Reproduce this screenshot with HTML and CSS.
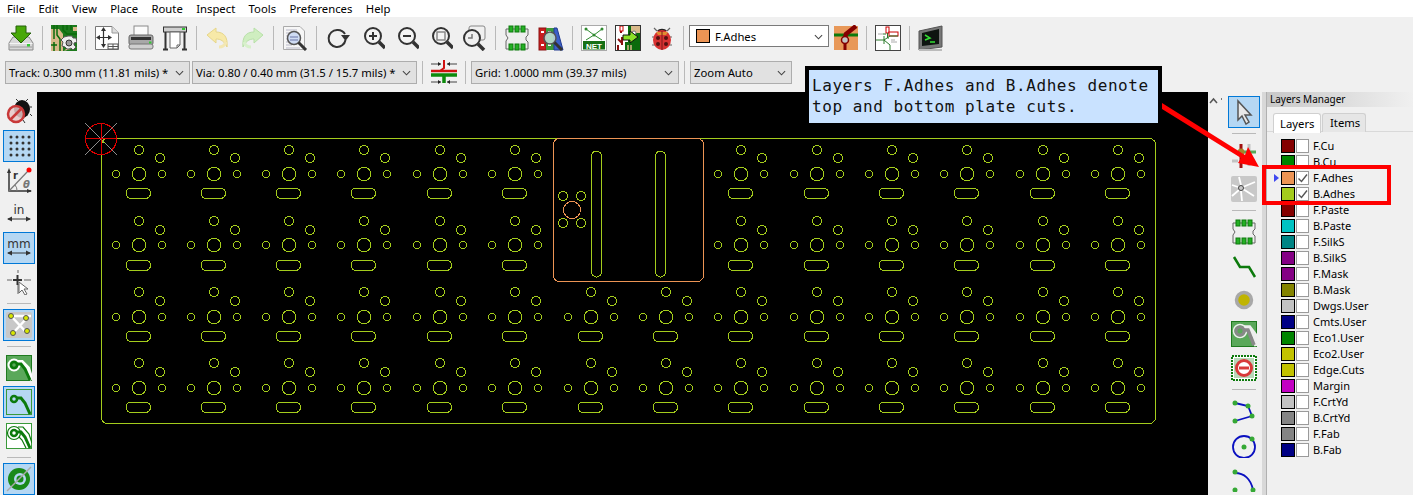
FILE: index.html
```html
<!DOCTYPE html>
<html lang="en">
<head>
<meta charset="utf-8">
<title>Pcbnew</title>
<link rel="stylesheet" href="styles.css">
</head>
<body>
<div class="app">
  <nav class="menubar">
    <span>File</span><span>Edit</span><span>View</span><span>Place</span><span>Route</span><span>Inspect</span><span>Tools</span><span>Preferences</span><span>Help</span>
  </nav>

  <div class="toolbar">
    <svg class="ico" viewBox="0 0 26 26"><path d="M1 18 5 12H21L25 18V25H1Z" fill="#d8d8d8" stroke="#8a8a8a"/><path d="M1.500 18.500H24.500" stroke="#f4f4f4"/><path d="M2 22H24" stroke="#9a9a9a" stroke-width="1"/><rect x="19" y="19" width="3" height="2.500" fill="#35c835"/><path d="M8 1H18V8H23L13 18 3 8H8Z" fill="#48a808" stroke="#24600a"/></svg>
    <i class="sep"></i>
    <svg class="ico" viewBox="0 0 26 26"><rect width="26" height="26" fill="#1d7a1d"/><path d="M0 4H8L12 9V26H0Z" fill="#d9b98a"/><path d="M3 0V14M6 0V10L9 14V26M3 17V26M12 0V5L16 9H26M16 0V5M20 0V5M0 20H6" stroke="#0b6b0b" stroke-width="1.500" fill="none"/><path d="M13 26 17 22H26M22 2H26V6H22Z" fill="#d9b98a"/><path d="M17 11H21L22 13 25 13 26 17 23 18V20L25 22 22 25 20 23 18 24H16L14 22 11 21 12 17 10 15 13 12Z" fill="#eee" stroke="#555"/><circle cx="18" cy="18" r="3" fill="#999" stroke="#333"/></svg>
    <i class="sep"></i>
    <svg class="ico" viewBox="0 0 26 26"><path d="M1.500 1.500H18L24.500 8V24.500H1.500Z" fill="#fff" stroke="#777"/><path d="M18 1.500V8H24.500" fill="#ddd" stroke="#999"/><path d="M9.500 4V21M3 12.500H17" stroke="#333" stroke-width="1.200"/><path d="M9.500 2 7 6H12ZM9.500 23 7 19H12ZM2 12.500 6 10V15ZM18 12.500 14 10V15Z" fill="#333"/><rect x="14" y="19" width="10" height="5" fill="#fff" stroke="#555"/><path d="M14 21.500H24M19 19V24" stroke="#555"/></svg>
    <svg class="ico" viewBox="0 0 26 26"><rect x="6" y="1" width="14" height="10" fill="#fbfbfb" stroke="#8a8a8a"/><rect x="1" y="10" width="24" height="10" rx="2" fill="#a8a8a8" stroke="#666"/><rect x="3" y="12" width="20" height="3" fill="#333"/><rect x="1" y="19" width="24" height="5" rx="2" fill="#cfcfcf" stroke="#777"/><rect x="21" y="16.500" width="2.500" height="2" fill="#35c835"/></svg>
    <svg class="ico" viewBox="0 0 26 26"><rect x="1.500" y="2" width="23" height="5" fill="#cfcfcf" stroke="#333"/><rect x="20" y="3" width="3" height="2" fill="#35c835"/><path d="M3.500 7V24M22.500 7V24M1 24.500H6M20 24.500H25" stroke="#333" stroke-width="2" fill="none"/><path d="M8 7H18V20L15 23H8Z" fill="#fff" stroke="#666"/><path d="M15 23V20H18" fill="none" stroke="#666"/></svg>
    <i class="sep"></i>
    <svg class="ico" viewBox="0 0 26 26"><path d="M2 10 11 3V7C19 7 23 12 22 22 19 16 16 14 11 14V18Z" fill="#f7e9a8" stroke="#e6d68a"/><path d="M14 22C18 22 20 20 21 17" stroke="#f3e7b3" stroke-width="3" fill="none"/></svg>
    <svg class="ico" viewBox="0 0 26 26"><path d="M24 10 15 3V7C7 7 3 12 4 22 7 16 10 14 15 14V18Z" fill="#cfeec0" stroke="#b8e0a8"/><path d="M12 22C8 22 6 20 5 17" stroke="#d8f0cc" stroke-width="3" fill="none"/></svg>
    <i class="sep"></i>
    <svg class="ico" viewBox="0 0 26 26"><path d="M1.500 1.500H18L22.500 6V24.500H1.500Z" fill="#f6f6f6" stroke="#aaa"/><path d="M4 5H15M4 8H8M4 11H6M4 14H6M4 17H7M4 20H10M4 23H18" stroke="#b8b8c8"/><circle cx="12" cy="13" r="6.500" fill="#cfdcf4" stroke="#555" stroke-width="1.500"/><path d="M8 12H16M8 15H16" stroke="#8c96c0" stroke-width="1.500"/><path d="M16.500 17.500 24 25" stroke="#333" stroke-width="3"/></svg>
    <i class="sep"></i>
    <svg class="ico" viewBox="0 0 26 26"><path d="M12 5A8.500 8.500 0 1 0 20.500 15" fill="none" stroke="#333" stroke-width="2"/><path d="M12 5A8.500 8.500 0 0 1 20 9" fill="none" stroke="#333" stroke-width="2"/><path d="M16 10H25L20.500 16Z" fill="#333"/></svg>
    <svg class="ico" viewBox="0 0 26 26"><circle cx="14" cy="11" r="8" fill="#fff" fill-opacity=".3" stroke="#333" stroke-width="2"/><path d="M10 11H18M14 7V15" stroke="#333" stroke-width="2"/><path d="M20 17 26 23" stroke="#333" stroke-width="3.500"/></svg>
    <svg class="ico" viewBox="0 0 26 26"><circle cx="14" cy="11" r="8" fill="#fff" fill-opacity=".3" stroke="#333" stroke-width="2"/><path d="M10 11H18" stroke="#333" stroke-width="2"/><path d="M20 17 26 23" stroke="#333" stroke-width="3.500"/></svg>
    <svg class="ico" viewBox="0 0 26 26"><circle cx="14" cy="11" r="8" fill="#fff" fill-opacity=".3" stroke="#333" stroke-width="2"/><rect x="10" y="7" width="8" height="8" fill="none" stroke="#888" stroke-width="1.500"/><path d="M20 17 26 23" stroke="#333" stroke-width="3.500"/></svg>
    <svg class="ico" viewBox="0 0 26 26"><rect x="8" y="1" width="16" height="14" rx="2" fill="#f0f0f0" stroke="#888"/><circle cx="11" cy="13" r="8" fill="#f0f0f0" stroke="#333" stroke-width="2"/><path d="M7 13H11V9" fill="none" stroke="#777" stroke-width="1.500"/><path d="M17 19 23 25" stroke="#333" stroke-width="3.500"/></svg>
    <i class="sep"></i>
    <svg class="ico" viewBox="0 0 26 26"><use href="#fp"/></svg>
    <svg class="ico" viewBox="0 0 26 26"><rect x="1" y="3" width="7" height="22" fill="#c81e1e" stroke="#8a1010"/><rect x="8" y="3" width="8" height="22" fill="#3c9a3c"/><path d="M16 3H19L25 25H16Z" fill="#3c5fc8" stroke="#203a90"/><path d="M3 7H6M3 20H6M10 7H13M10 20H13" stroke="#fff" stroke-width="2"/><circle cx="12" cy="13" r="6" fill="#cfe6e6" fill-opacity=".8" stroke="#555" stroke-width="1.500"/><path d="M16.500 17.500 24 25" stroke="#333" stroke-width="3"/></svg>
    <i class="sep"></i>
    <svg class="ico" viewBox="0 0 26 26"><rect x=".5" y=".5" width="25" height="25" fill="#fff" stroke="#aaa"/><path d="M5 4 13 10 21 4M5 15 13 10 21 15" stroke="#2f8a2f" fill="none"/><circle cx="5" cy="4" r="1.500" fill="#2f8a2f"/><circle cx="21" cy="4" r="1.500" fill="#2f8a2f"/><circle cx="13" cy="10" r="1.500" fill="#2f8a2f"/><rect x="2" y="16" width="22" height="8.500" fill="#167016"/><text x="13" y="23.500" class="net">NET</text></svg>
    <svg class="ico" viewBox="0 0 26 26"><rect width="26" height="26" fill="#fff"/><path d="M13 0H26V26H10V17H13Z" fill="#0c6b0c"/><path d="M16 0H26V8H20L16 12Z" fill="#d9b98a"/><circle cx="19" cy="8" r="2" fill="#fff" stroke="#777"/><path d="M6 3V8M3 14 7 18M7 12V20M3 26V20" stroke="#8a1010" stroke-width="2" fill="none"/><rect x="5" y="1" width="3" height="5" fill="#fff" stroke="#c00"/><path d="M8 10H15V6L23 12 15 18V15H8Z" fill="#8be028" stroke="#111"/><path d="M13 26V20M16 26V20" stroke="#d9b98a" stroke-width="1.500"/><rect x=".5" y=".5" width="25" height="25" fill="none" stroke="#333"/></svg>
    <svg class="ico" viewBox="0 0 26 26"><path d="M5 3 8 6M21 3 18 6M3 12H6M20 12H23M3 20H6M20 20H23" stroke="#666" stroke-width="1.200"/><path d="M8 6C10 3 16 3 18 6Z" fill="#222"/><ellipse cx="13" cy="15" rx="9" ry="10" fill="#d83232"/><path d="M7 7H19L17 10H9Z" fill="#e8c830" fill-opacity=".6"/><path d="M13 6V25" stroke="#7a1a1a"/><circle cx="9" cy="13" r="2" fill="#511"/><circle cx="17" cy="13" r="2" fill="#511"/><circle cx="9" cy="19" r="2" fill="#511"/><circle cx="17" cy="19" r="2" fill="#511"/></svg>
    <i class="sep"></i>
    <div class="layer-select">
      <b class="swatch-lg"></b><span>F.Adhes</span>
      <svg class="chev" viewBox="0 0 10 6"><path d="M1 1 5 5 9 1" fill="none" stroke="#444" stroke-width="1.200"/></svg>
    </div>
    <svg class="ico narrow" viewBox="0 0 24 26"><rect y="1" width="24" height="24" fill="#e89858"/><path d="M0 10H24" stroke="#0c7a0c" stroke-width="3"/><path d="M11 13 12 9 22 1" stroke="#840000" stroke-width="4.500" fill="none"/><path d="M11 14V25" stroke="#840000" stroke-width="3"/><circle cx="11" cy="15" r="3.500" fill="#c2c2c2" stroke="#840000" stroke-width="1.500"/></svg>
    <i class="sep"></i>
    <svg class="ico" viewBox="0 0 26 26"><rect x=".5" y=".5" width="25" height="25" fill="#fff" stroke="#444"/><rect x="11" y="2" width="3" height="6" fill="#fff" stroke="#c00"/><rect x="14" y="7" width="9" height="4" fill="#fff" stroke="#c00"/><path d="M12.500 8V13H14M8 9H11M1 15H9M9 11V19M9 15 15 11M9 15 15 20" stroke="#2a7a2a" fill="none"/><path d="M15 20V25M15 11H23" stroke="#2a7a2a"/><path d="M16 15H20M16 17H22M3 9H8" stroke="#aaa"/></svg>
    <i class="sep"></i>
    <svg class="ico" viewBox="0 0 26 26"><path d="M1 6 24 1V22L1 25Z" fill="#777" stroke="#555"/><path d="M4 8 21 4V19L4 21Z" fill="#0e1410"/><path d="M7 10 12 13 7 15" fill="none" stroke="#35e035" stroke-width="1.500"/><path d="M12 17H17" stroke="#35e035" stroke-width="1.500"/><path d="M1 25H24" stroke="#bbb" stroke-width="2"/></svg>
  </div>

  <div class="toolbar2">
    <div class="combo track">Track: 0.300 mm (11.81 mils) *<svg class="chev" viewBox="0 0 10 6"><path d="M1 1 5 5 9 1" fill="none" stroke="#444" stroke-width="1.200"/></svg></div>
    <div class="combo via">Via: 0.80 / 0.40 mm (31.5 / 15.7 mils) *<svg class="chev" viewBox="0 0 10 6"><path d="M1 1 5 5 9 1" fill="none" stroke="#444" stroke-width="1.200"/></svg></div>
    <i class="sep tall"></i>
    <svg class="ico spaced" viewBox="0 0 26 26"><path d="M0 4H10M16 4H26" stroke="#444"/><path d="M10 4 7 2V6ZM16 4 19 2V6Z" fill="#222"/><path d="M13 0V8L9 11" stroke="#d01010" stroke-width="2" fill="none"/><path d="M0 11H26" stroke="#d01010" stroke-width="2.500"/><path d="M0 15H26" stroke="#0c8a0c" stroke-width="3.500"/><path d="M13 15V23" stroke="#0c8a0c" stroke-width="3.500"/><path d="M0 22H10M16 22H26" stroke="#444"/><path d="M10 22 7 20V24ZM16 22 19 20V24Z" fill="#222"/></svg>
    <i class="sep tall"></i>
    <div class="combo grid">Grid: 1.0000 mm (39.37 mils)<svg class="chev" viewBox="0 0 10 6"><path d="M1 1 5 5 9 1" fill="none" stroke="#444" stroke-width="1.200"/></svg></div>
    <i class="sep tall"></i>
    <div class="combo zoom">Zoom Auto<svg class="chev" viewBox="0 0 10 6"><path d="M1 1 5 5 9 1" fill="none" stroke="#444" stroke-width="1.200"/></svg></div>
  </div>

  <main class="main">
    <aside class="lefttools">
      <div class="tool"><svg class="ico" viewBox="0 0 26 26"><ellipse cx="16" cy="10" rx="8" ry="9" fill="#111"/><path d="M12 2 10 0M20 2 22 0M24 8H26M24 15 26 17M17 21 19 24" stroke="#333"/><circle cx="10" cy="15" r="8" fill="#e8c8c8" fill-opacity=".85" stroke="#c83838" stroke-width="2.500"/><path d="M5 20 15 10" stroke="#c83838" stroke-width="2.500"/></svg></div>
      <div class="tool on"><svg class="ico" viewBox="0 0 26 26"><g fill="#333"><circle cx="5" cy="4" r="1.500"/><circle cx="11" cy="4" r="1.500"/><circle cx="17" cy="4" r="1.500"/><circle cx="23" cy="4" r="1.500"/><circle cx="5" cy="10" r="1.500"/><circle cx="11" cy="10" r="1.500"/><circle cx="17" cy="10" r="1.500"/><circle cx="23" cy="10" r="1.500"/><circle cx="5" cy="16" r="1.500"/><circle cx="11" cy="16" r="1.500"/><circle cx="17" cy="16" r="1.500"/><circle cx="23" cy="16" r="1.500"/><circle cx="5" cy="22" r="1.500"/><circle cx="11" cy="22" r="1.500"/><circle cx="17" cy="22" r="1.500"/><circle cx="23" cy="22" r="1.500"/></g></svg></div>
      <div class="tool"><svg class="ico" viewBox="0 0 26 26"><path d="M3 4V24H25" fill="none" stroke="#333" stroke-width="1.500"/><path d="M3 1 1 6H5ZM26 24 21 22V26Z" fill="#333"/><path d="M3 24 22 4" stroke="#777" stroke-width="1.200"/><circle cx="23" cy="3" r="2.500" fill="#f00"/><path d="M11 24A8 8 0 0 0 9 18" fill="none" stroke="#777"/><text x="7" y="12" class="g-r">r</text><text x="17" y="21" class="g-t">θ</text></svg></div>
      <div class="tool"><svg class="ico" viewBox="0 0 26 26"><text x="13" y="13" class="unit">in</text><path d="M2 18H24" stroke="#333"/><path d="M1 18 6 15.500V20.500ZM25 18 20 15.500V20.500Z" fill="#333"/></svg></div>
      <div class="tool on"><svg class="ico" viewBox="0 0 26 26"><text x="13" y="13" class="unit">mm</text><path d="M2 18H24" stroke="#333"/><path d="M1 18 6 15.500V20.500ZM25 18 20 15.500V20.500Z" fill="#333"/></svg></div>
      <div class="tool"><svg class="ico" viewBox="0 0 26 26"><path d="M1 11H6M18 11H25M12 1V4M12 15V25" stroke="#aaa" stroke-width="2"/><path d="M7 11H16M11.500 6V16" stroke="#333" stroke-width="2"/><path d="M13 13V24L16 21 19 26 21 25 18 20 22 20Z" fill="#fff" stroke="#666"/></svg></div>
      <i class="hsep"></i>
      <div class="tool on"><svg class="ico" viewBox="0 0 26 26"><rect width="26" height="26" rx="2" fill="#c8c8c8"/><path d="M5 4 20 20M21 6 8 20M7 4H25" stroke="#fff" stroke-width="2.500"/><g fill="#d8e800" stroke="#555"><circle cx="5" cy="4" r="2.500"/><circle cx="20" cy="6" r="2.500"/><circle cx="7" cy="21" r="2.500"/><circle cx="21" cy="19" r="2.500"/></g></svg></div>
      <i class="hsep"></i>
      <div class="tool"><svg class="ico" viewBox="0 0 26 26"><rect x=".5" y=".5" width="25" height="25" fill="#5aa85a" stroke="#1f7a1f"/><use href="#tr-w"/><use href="#tr-g"/></svg></div>
      <div class="tool on"><svg class="ico" viewBox="0 0 26 26"><rect x=".5" y=".5" width="25" height="25" fill="none" stroke="#3a9a3a"/><use href="#tr-g"/></svg></div>
      <div class="tool"><svg class="ico" viewBox="0 0 26 26"><rect x=".5" y=".5" width="25" height="25" fill="#fff" stroke="#3a9a3a"/><use href="#tr-w2"/><use href="#tr-g"/></svg></div>
      <i class="hsep"></i>
      <div class="tool on"><svg class="ico" viewBox="0 0 26 26"><circle cx="13" cy="13" r="11" fill="#1a8a1a"/><circle cx="14" cy="13" r="6" fill="#b5d7f3"/><circle cx="14" cy="13" r="3.500" fill="#1a8a1a"/><path d="M1 25 25 1" stroke="#aaa" stroke-width="1.500"/></svg></div>
    </aside>

    <div class="canvas">
      <svg class="board" viewBox="37 92 1171 403" shape-rendering="crispEdges">
        <defs>
          <g id="key"><circle cy="-24" r="4.500"/><circle cx="21" cy="-16" r="4.500"/><circle cx="-23" r="3.500"/><circle cx="23" r="3.500"/><circle r="6.800"/><rect x="-13" y="14" width="24.500" height="10.500" rx="5"/></g>
          <g id="key-b"><circle cy="-24" r="4.500"/><circle cx="21" cy="-15" r="4.500"/><circle cx="-23" r="3.500"/><circle cx="23" r="3.500"/><circle r="6.800"/><rect x="-13" y="15" width="24.500" height="10.500" rx="5"/></g>
          <g id="key-c"><circle cy="-25" r="4.500"/><circle cx="21" cy="-16" r="4.500"/><circle cx="-23" r="3.500"/><circle cx="23" r="3.500"/><circle r="6.800"/><rect x="-13" y="14" width="24.500" height="10.500" rx="5"/></g>
        </defs>
        <g class="adhes-b">
          <rect x="101.500" y="138.500" width="1054" height="285" rx="6"/>
          <use href="#key" x="139" y="174"/><use href="#key" x="214" y="174"/><use href="#key" x="289" y="174"/><use href="#key" x="364" y="174"/><use href="#key" x="440" y="174"/><use href="#key" x="515" y="174"/><use href="#key" x="741" y="174"/><use href="#key" x="817" y="174"/><use href="#key" x="892" y="174"/><use href="#key" x="967" y="174"/><use href="#key" x="1043" y="174"/><use href="#key" x="1118" y="174"/>
          <use href="#key-b" x="139" y="245"/><use href="#key-b" x="214" y="245"/><use href="#key-b" x="289" y="245"/><use href="#key-b" x="364" y="245"/><use href="#key-b" x="440" y="245"/><use href="#key-b" x="515" y="245"/><use href="#key-b" x="741" y="245"/><use href="#key-b" x="817" y="245"/><use href="#key-b" x="892" y="245"/><use href="#key-b" x="967" y="245"/><use href="#key-b" x="1043" y="245"/><use href="#key-b" x="1118" y="245"/>
          <use href="#key-c" x="139" y="317"/><use href="#key-c" x="214" y="317"/><use href="#key-c" x="289" y="317"/><use href="#key-c" x="364" y="317"/><use href="#key-c" x="440" y="317"/><use href="#key-c" x="515" y="317"/><use href="#key-c" x="591" y="317"/><use href="#key-c" x="666" y="317"/><use href="#key-c" x="741" y="317"/><use href="#key-c" x="817" y="317"/><use href="#key-c" x="892" y="317"/><use href="#key-c" x="967" y="317"/><use href="#key-c" x="1043" y="317"/><use href="#key-c" x="1118" y="317"/>
          <use href="#key-c" x="139" y="388"/><use href="#key-c" x="214" y="388"/><use href="#key-c" x="289" y="388"/><use href="#key-c" x="364" y="388"/><use href="#key-c" x="440" y="388"/><use href="#key-c" x="515" y="388"/><use href="#key-c" x="591" y="388"/><use href="#key-c" x="666" y="388"/><use href="#key-c" x="741" y="388"/><use href="#key-c" x="817" y="388"/><use href="#key-c" x="892" y="388"/><use href="#key-c" x="967" y="388"/><use href="#key-c" x="1043" y="388"/><use href="#key-c" x="1118" y="388"/>
          <rect x="591.500" y="151" width="10" height="126" rx="5"/>
          <rect x="655.500" y="151" width="10" height="126" rx="5"/>
          <circle cx="563" cy="196" r="4.500"/><circle cx="581" cy="196" r="4.500"/><circle cx="563" cy="223" r="4.500"/><circle cx="581" cy="223" r="4.500"/>
        </g>
        <g class="adhes-f">
          <rect x="553.500" y="138.500" width="150" height="143" rx="6"/>
          <circle cx="572" cy="210" r="8.500"/>
        </g>
        <g class="origin">
          <path class="grey" d="M85 123 117 155M117 123 85 155"/>
          <circle class="red" cx="101" cy="139" r="15.500"/>
          <path class="red" d="M85 138.500H117M101.500 123V155"/>
          <path class="tick" d="M102.500 139.500V142.500H105"/>
        </g>
      </svg>
    </div>

    <aside class="righttools">
      <svg class="grip" viewBox="0 0 14 8"><path d="M1 6 4.500 2 8 6" fill="none" stroke="#555" stroke-width="1.500"/><path d="M12.500 1V3" stroke="#777"/></svg>
      <div class="rcol">
        <div class="tool on"><svg class="ico" viewBox="0 0 26 26"><path d="M7 2V21L11 17 15 25 18 23 14 16H20Z" fill="#e8e8e8" stroke="#555" stroke-width="1.500"/></svg></div>
        <i class="hsep"></i>
        <div class="tool"><svg class="ico" viewBox="0 0 26 26"><path d="M1 19H7M13 19H24M18 2V24" stroke="#c2c2c2" stroke-width="3"/><path d="M10 2V26" stroke="#a01010" stroke-width="3"/><path d="M12 10H25" stroke="#58a858" stroke-width="3"/><circle cx="10" cy="10" r="3.500" fill="#a88428"/></svg></div>
        <div class="tool"><svg class="ico" viewBox="0 0 26 26"><rect width="26" height="26" rx="2" fill="#c8c8c8"/><path d="M10 9 8 1M12 11 24 6M12 13 23 20M10 15 11 25M8 14 1 20M7 11 1 9" stroke="#fff" stroke-width="1.800"/><circle cx="10" cy="12" r="2.500" fill="#c8c8c8" stroke="#444"/></svg></div>
        <i class="hsep"></i>
        <div class="tool"><svg class="ico" viewBox="0 0 26 26"><use href="#fp"/></svg></div>
        <div class="tool"><svg class="ico" viewBox="0 0 26 26"><path d="M3 4 9 14H18L24 24" fill="none" stroke="#0c7a0c" stroke-width="2.500"/></svg></div>
        <div class="tool"><svg class="ico" viewBox="0 0 26 26"><circle cx="13" cy="13" r="7.500" fill="#c0b400" stroke="#a8a8a8" stroke-width="3.500"/></svg></div>
        <div class="tool"><svg class="ico" viewBox="0 0 26 26"><rect x=".5" y=".5" width="25" height="25" fill="#5aa85a" stroke="#1f7a1f"/><g fill="none"><circle cx="9" cy="10" r="6.500" stroke="#eee" stroke-width="1.500"/><path d="M13 7H18L24 15 26 25" stroke="#eee" stroke-width="5.500"/><path d="M13 9H17L23 24" stroke="#888" stroke-width="3.500"/><circle cx="9" cy="10" r="4" stroke="#888" stroke-width="3"/></g></svg></div>
        <div class="tool"><svg class="ico" viewBox="0 0 26 26"><rect x="1" y="1" width="24" height="24" fill="#fff" stroke="#0c7a0c" stroke-width="2" stroke-dasharray="2 1"/><rect x="3" y="3" width="20" height="20" fill="#b8d8b8"/><circle cx="13" cy="13" r="7.500" fill="#fff" stroke="#d83a3a" stroke-width="3"/><path d="M8 13H18" stroke="#d83a3a" stroke-width="3"/></svg></div>
        <i class="hsep"></i>
        <div class="tool"><svg class="ico" viewBox="0 0 26 26"><path d="M4 5 17 8 21 18 4 23" fill="none" stroke="#0a10c0" stroke-width="1.800"/><g fill="#35a835"><circle cx="4" cy="5" r="2.500"/><circle cx="17" cy="8" r="2.500"/><circle cx="21" cy="18" r="2.500"/><circle cx="4" cy="23" r="2.500"/></g></svg></div>
        <div class="tool"><svg class="ico" viewBox="0 0 26 26"><circle cx="13" cy="15" r="11" fill="none" stroke="#0a10c0" stroke-width="1.800"/><circle cx="13" cy="15" r="2.500" fill="#35a835"/><circle cx="21" cy="7" r="2.500" fill="#35a835"/></svg></div>
        <div class="tool"><svg class="ico" viewBox="0 0 26 26"><path d="M4 7C13 7 20 13 22 24" fill="none" stroke="#0a10c0" stroke-width="1.800"/><g fill="#35a835"><circle cx="4" cy="6" r="2.500"/><circle cx="4" cy="24" r="2.500"/><circle cx="22" cy="24" r="2.500"/></g></svg></div>
      </div>
    </aside>

    <div class="splitter"></div>

    <section class="panel">
      <header class="panel-title">Layers Manager</header>
      <div class="tabs"><span class="tab active">Layers</span><span class="tab">Items</span></div>
      <ul class="layers">
        <li><b class="sw c1"></b><i class="cb"></i>F.Cu</li>
        <li><b class="sw c2"></b><i class="cb"></i>B.Cu</li>
        <li class="current"><b class="sw c3"></b><i class="cb"><svg viewBox="0 0 11 11"><path d="M1.500 6 4.500 9 10 2" fill="none" stroke="#555" stroke-width="1.400"/></svg></i>F.Adhes</li>
        <li><b class="sw c4"></b><i class="cb"><svg viewBox="0 0 11 11"><path d="M1.500 6 4.500 9 10 2" fill="none" stroke="#555" stroke-width="1.400"/></svg></i>B.Adhes</li>
        <li><b class="sw c1"></b><i class="cb"></i>F.Paste</li>
        <li><b class="sw c5"></b><i class="cb"></i>B.Paste</li>
        <li><b class="sw c6"></b><i class="cb"></i>F.SilkS</li>
        <li><b class="sw c7"></b><i class="cb"></i>B.SilkS</li>
        <li><b class="sw c7"></b><i class="cb"></i>F.Mask</li>
        <li><b class="sw c8"></b><i class="cb"></i>B.Mask</li>
        <li><b class="sw c9"></b><i class="cb"></i>Dwgs.User</li>
        <li><b class="sw c10"></b><i class="cb"></i>Cmts.User</li>
        <li><b class="sw c2"></b><i class="cb"></i>Eco1.User</li>
        <li><b class="sw c11"></b><i class="cb"></i>Eco2.User</li>
        <li><b class="sw c11"></b><i class="cb"></i>Edge.Cuts</li>
        <li><b class="sw c12"></b><i class="cb"></i>Margin</li>
        <li><b class="sw c9"></b><i class="cb"></i>F.CrtYd</li>
        <li><b class="sw c13"></b><i class="cb"></i>B.CrtYd</li>
        <li><b class="sw c13"></b><i class="cb"></i>F.Fab</li>
        <li><b class="sw c10"></b><i class="cb"></i>B.Fab</li>
      </ul>
    </section>
  </main>
</div>

<div class="callout">Layers F.Adhes and B.Adhes denote<br>top and bottom plate cuts.</div>
<div class="redbox"></div>
<svg class="pointer" viewBox="0 0 110 76"><path d="M0 1 83 53 86 45 97 65 76 61 79 56 0 7Z" fill="#f00"/></svg>

<svg class="defs" width="0" height="0">
  <defs>
    <g id="fp"><path d="M2 4H24V10L22 12V15L24 17V24H2V16L4 13 2 10Z" fill="#eee" stroke="#666"/><g fill="#24b024" stroke="#0c7a0c"><rect x="5" y="1" width="4" height="6"/><rect x="11" y="1" width="4" height="6"/><rect x="17" y="1" width="4" height="6"/><rect x="5" y="19" width="4" height="6"/><rect x="11" y="19" width="4" height="6"/><rect x="17" y="19" width="4" height="6"/></g></g>
    <g id="tr-g" fill="none" stroke="#0c7a0c"><circle cx="8" cy="10" r="3" stroke-width="2.500"/><path d="M11 9H15L19 14 24 25" stroke-width="3"/></g>
    <g id="tr-w" fill="none" stroke="#fff"><circle cx="8" cy="10" r="5.500" stroke-width="2"/><path d="M12 7H16L22 13 26 25" stroke-width="4"/></g>
    <g id="tr-w2" fill="none" stroke="#0c7a0c" stroke-width="1.200"><circle cx="8" cy="10" r="6.500"/><path d="M12 4H17L23 11 26 20M13 14 16 17 20 25"/></g>
  </defs>
</svg>
</body>
</html>
```

FILE: styles.css
```css
* { box-sizing: border-box; }
html, body { margin: 0; padding: 0; }
body {
  width: 1413px;
  height: 495px;
  overflow: hidden;
  position: relative;
  background: #f0f0f0;
  color: #000;
  font: 11.3px "Noto Sans", "Open Sans", sans-serif;
}
.app { display: flex; flex-direction: column; height: 495px; }

.menubar {
  height: 17px;
  flex: none;
  background: #fff;
  display: flex;
  gap: 13.4px;
  padding-left: 7px;
  line-height: 17px;
}

.ico { width: 26px; height: 26px; flex: none; display: block; }
.ico.narrow { width: 24px; }
.sep { width: 1px; height: 24px; background: #b9b9b9; flex: none; display: block; }
.sep.tall { height: 23px; }

.toolbar {
  height: 40px;
  flex: none;
  display: flex;
  align-items: flex-start;
  gap: 8px;
  padding: 8px 0 0 8px;
}
.toolbar .sep { margin-top: 1px; }

.layer-select {
  width: 140px;
  height: 22px;
  margin: 0 -3px;
  background: #fff;
  border: 1px solid #7a7a7a;
  display: flex;
  align-items: center;
  padding-left: 6px;
  gap: 5px;
  position: relative;
}
.swatch-lg { width: 14px; height: 14px; background: #ec9454; border: 1px solid #000; }
.chev { width: 9px; height: 6px; position: absolute; right: 5px; top: 8px; }

.toolbar2 {
  height: 35px;
  flex: none;
  display: flex;
  align-items: flex-start;
  gap: 5px;
  padding: 4px 0 0 5px;
}
.combo {
  height: 23px;
  background: #e1e1e1;
  border: 1px solid #adadad;
  line-height: 21px;
  padding-left: 3px;
  position: relative;
  white-space: nowrap;
  flex: none;
}
.combo .chev { top: 8px; right: 5px; }
.track { width: 185px; }
.via { width: 225px; margin-left: -3px; }
.grid { width: 208px; }
.zoom { width: 102px; }
.spaced { margin: -1px 3px; }

.main { flex: 1; display: flex; min-height: 0; }

.lefttools {
  width: 37px;
  flex: none;
  display: flex;
  flex-direction: column;
  align-items: center;
  gap: 2px;
  padding-top: 4px;
}
.tool {
  width: 32px;
  height: 32px;
  flex: none;
  display: flex;
  align-items: center;
  justify-content: center;
  border: 1px solid transparent;
}
.tool.on { background: #b5d7f3; border-color: #0078d7; }
.hsep { width: 24px; height: 1px; margin: 3px 0; background: #b9b9b9; flex: none; display: block; }

.canvas { width: 1171px; flex: none; background: #000; }
.board { width: 1171px; height: 403px; display: block; fill: none; stroke-width: 1; }
.adhes-b { stroke: #a4cc1c; }
.adhes-f { stroke: #ec9454; }
.origin .grey { stroke: #8c8c8c; }
.origin .red { stroke: #e00000; }
.origin .tick { stroke: #a4cc1c; }

.righttools { width: 54px; flex: none; display: flex; padding-top: 4px; }
.grip { width: 14px; height: 8px; margin: 1px 5px 0 1px; flex: none; }
.rcol { display: flex; flex-direction: column; align-items: center; gap: 2px; width: 32px; }

.splitter { flex: none; background: #d8d8d8; border-right: 1px solid #b0b0b0; width: 5px; }

.panel { flex: 1; min-width: 0; background: #f0f0f0; }
.panel-title {
  height: 15px;
  padding-left: 3px;
  font-size: 10px;
  line-height: 14px;
  background: linear-gradient(to right, #c8c8c8, #f0f0f0);
}
.tabs {
  height: 25px;
  padding: 6px 0 0 6px;
  display: flex;
  gap: 1px;
  border-bottom: 1px solid #d9d9d9;
}
.tab {
  width: 44px;
  height: 19px;
  padding: 0 7px;
  line-height: 18px;
  background: #e6e6e6;
  border: 1px solid #d0d0d0;
  border-bottom: 0;
  border-radius: 3px 3px 0 0;
}
.tab.active { background: #fff; width: 48px; height: 20px; padding: 1px 6px 0; }

.layers { list-style: none; margin: 6px 0 0; padding: 0 0 0 14px; font-size: 11px; }
.layers li { height: 16px; display: flex; align-items: center; line-height: 16px; position: relative; }
.sw { width: 14px; height: 14px; border: 1px solid #000; flex: none; }
.cb { width: 13px; height: 14px; margin: 0 4px 0 1px; background: #fff; border: 1px solid #9a9a9a; flex: none; display: block; }
.cb svg { display: block; width: 11px; height: 12px; }
.current::before {
  content: "";
  position: absolute;
  left: -7px;
  top: 4px;
  border-left: 5px solid #3f48f0;
  border-top: 4px solid transparent;
  border-bottom: 4px solid transparent;
}
.c1 { background: #840000; }
.c2 { background: #008400; }
.c3 { background: #ec9454; }
.c4 { background: #a4cc1c; }
.c5 { background: #00c2c2; }
.c6 { background: #008484; }
.c7 { background: #840084; }
.c8 { background: #848400; }
.c9 { background: #c2c2c2; }
.c10 { background: #000084; }
.c11 { background: #c2c200; }
.c12 { background: #c200c2; }
.c13 { background: #848484; }

.callout {
  position: absolute;
  left: 805px;
  top: 66px;
  width: 357px;
  height: 61px;
  border: 4px solid #000;
  background: #c9e2ff;
  padding: 5px 0 0 3px;
  font: 16px/21px "DejaVu Sans Mono", monospace;
  letter-spacing: .57px;
  white-space: nowrap;
  color: #111;
}
.redbox {
  position: absolute;
  left: 1262px;
  top: 165px;
  width: 129px;
  height: 40px;
  border: 4px solid #f00;
}
.pointer { position: absolute; left: 1162px; top: 102px; width: 110px; height: 76px; overflow: visible; }
.defs { position: absolute; }

.net { font: bold 8px "Liberation Sans", sans-serif; fill: #fff; text-anchor: middle; }
.unit { font: 12px "DejaVu Sans", sans-serif; fill: #333; text-anchor: middle; }
.g-r { font: bold 10px "DejaVu Sans", sans-serif; fill: #333; }
.g-t { font: italic bold 10px "DejaVu Sans", sans-serif; fill: #777; }
```
